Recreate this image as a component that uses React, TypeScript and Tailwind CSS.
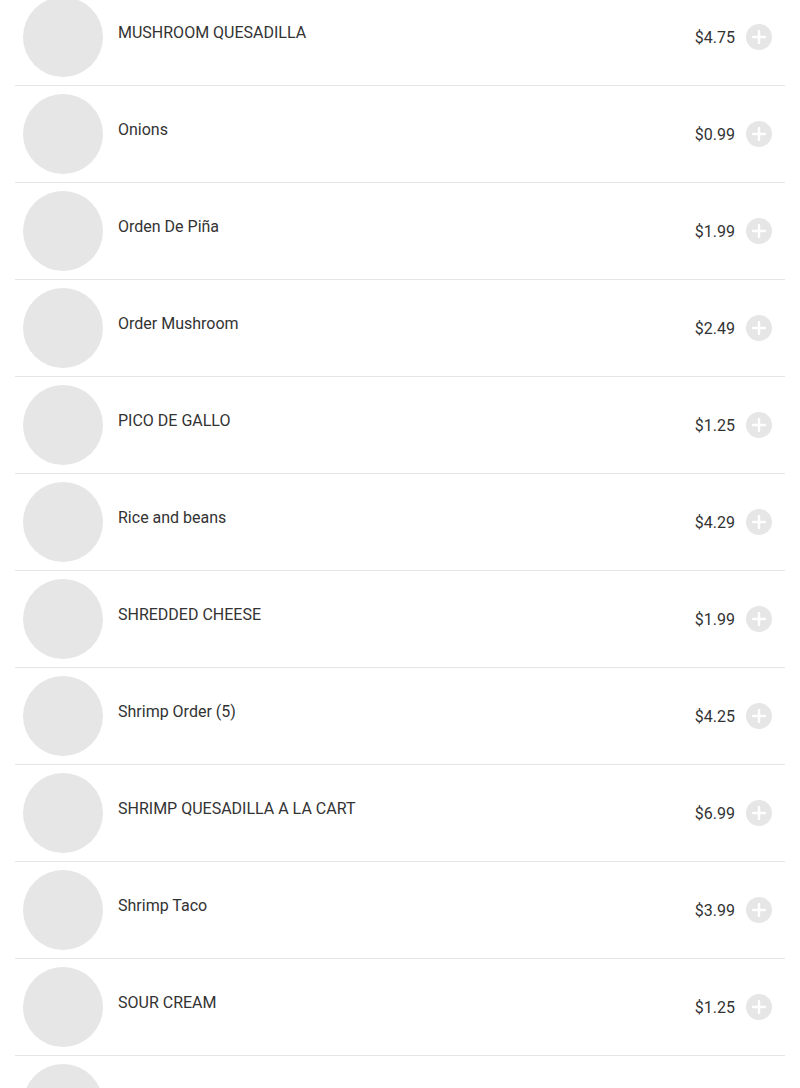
const items = [
  { name: "MUSHROOM QUESADILLA", price: "$4.75" },
  { name: "Onions", price: "$0.99" },
  { name: "Orden De Piña", price: "$1.99" },
  { name: "Order Mushroom", price: "$2.49" },
  { name: "PICO DE GALLO", price: "$1.25" },
  { name: "Rice and beans", price: "$4.29" },
  { name: "SHREDDED CHEESE", price: "$1.99" },
  { name: "Shrimp Order (5)", price: "$4.25" },
  { name: "SHRIMP QUESADILLA A LA CART", price: "$6.99" },
  { name: "Shrimp Taco", price: "$3.99" },
  { name: "SOUR CREAM", price: "$1.25" },
  { name: "Steak Taco", price: "$3.99" },
];

function PlusButton() {
  return (
    <button className="flex h-[26px] w-[26px] items-center justify-center rounded-full bg-[#e6e6e6]">
      <svg width="14" height="14" viewBox="0 0 14 14" fill="none">
        <path d="M7 1v12M1 7h12" stroke="#ffffff" strokeWidth="2.4" strokeLinecap="round" />
      </svg>
    </button>
  );
}

function MenuRow({ name, price }: { name: string; price: string }) {
  return (
    <div className="flex items-center border-b border-[#e6e6e6] py-2 pl-2 pr-[13px]">
      <div className="h-20 w-20 shrink-0 rounded-full bg-[#e6e6e6]" />
      <div className="ml-[15px] flex-1 self-stretch pt-6">
        <p className="text-base leading-6 text-[#333333]">{name}</p>
      </div>
      <div className="flex items-center gap-[11px]">
        <span className="pt-px text-base leading-6 text-[#333333]">{price}</span>
        <PlusButton />
      </div>
    </div>
  );
}

export default function App() {
  return (
    <div className="min-h-screen bg-white font-['Roboto',sans-serif]">
      <div className="-mt-[11px] px-[15px]">
        {items.map((item) => (
          <MenuRow key={item.name} name={item.name} price={item.price} />
        ))}
      </div>
    </div>
  );
}
